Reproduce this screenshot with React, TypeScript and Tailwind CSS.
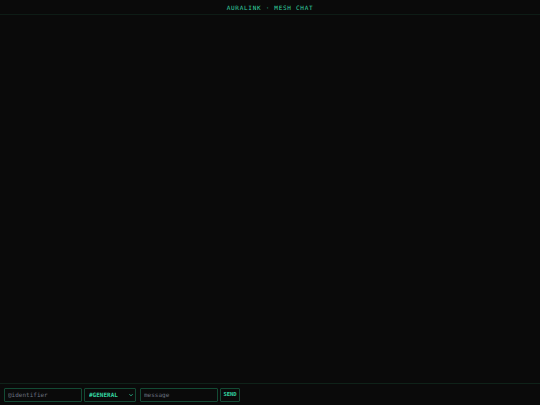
import { useState } from 'react';

const mono = "font-['DejaVu_Sans_Mono','Liberation_Mono',monospace]";

export default function App() {
  const [handle, setHandle] = useState('');
  const [channel, setChannel] = useState('general');
  const [message, setMessage] = useState('');

  return (
    <div className={`flex h-[405px] w-full flex-col bg-[#0a0a0a] ${mono}`}>
      <header className="flex h-[15px] shrink-0 items-center justify-center border-b border-[#0e1c16] pt-px">
        <h1 className="m-0 text-[6px] leading-none font-normal tracking-[0.12em] text-[#34d3a0]">
          AURALINK · MESH CHAT
        </h1>
      </header>

      <main className="flex-1" />

      <footer className="flex h-[22px] shrink-0 items-center gap-[2px] border-t border-[#0f2219] px-[4px]">
        <input
          value={handle}
          onChange={(e) => setHandle(e.target.value)}
          placeholder="@identifier"
          className="h-[14px] w-[78px] rounded-[1px] border border-[#134a34] bg-[#0a0a0a] px-[3px] text-[6px] text-[#34d3a0] outline-none placeholder:text-[#6b7280]"
        />
        <div className="relative mr-[2px] flex">
          <select
            value={channel}
            onChange={(e) => setChannel(e.target.value)}
            className="h-[14px] w-[52px] appearance-none rounded-[1px] border border-[#134a34] bg-[#0a0a0a] pl-[4px] text-[6px] font-bold text-[#34d3a0] outline-none"
          >
            <option value="general">#GENERAL</option>
          </select>
          <svg
            viewBox="0 0 10 10"
            className="pointer-events-none absolute top-[5px] right-[3px] h-[4px] w-[4px] text-[#34d3a0]"
            fill="none"
            stroke="currentColor"
            strokeWidth="2"
          >
            <path d="M1 3l4 4 4-4" />
          </svg>
        </div>
        <input
          value={message}
          onChange={(e) => setMessage(e.target.value)}
          placeholder="message"
          className="h-[14px] w-[78px] rounded-[1px] border border-[#134a34] bg-[#0a0a0a] px-[3px] text-[6px] text-[#34d3a0] outline-none placeholder:text-[#6b7280]"
        />
        <button className="flex h-[14px] w-[20px] items-center justify-center rounded-[1px] border border-[#134a34] bg-[#0a0a0a] p-0 text-[5.5px] font-bold text-[#34d3a0]">
          SEND
        </button>
      </footer>
    </div>
  );
}
